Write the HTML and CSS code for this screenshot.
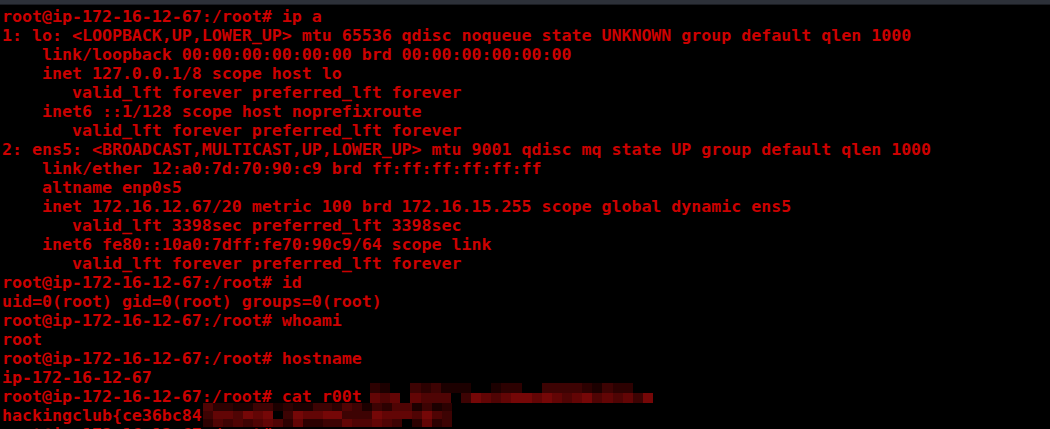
FILE: index.html
```html
<!DOCTYPE html>
<html lang="en">
<head>
    <meta charset="UTF-8">
    <title>Terminal</title>
    <link rel="stylesheet" href="styles.css">
</head>
<body>
    <!-- Barra superior da janela -->
    <div class="title-bar"></div>

    <!-- Saída do terminal -->
    <div class="terminal">
<pre class="output">root@ip-172-16-12-67:/root# ip a
1: lo: &lt;LOOPBACK,UP,LOWER_UP&gt; mtu 65536 qdisc noqueue state UNKNOWN group default qlen 1000
    link/loopback 00:00:00:00:00:00 brd 00:00:00:00:00:00
    inet 127.0.0.1/8 scope host lo
       valid_lft forever preferred_lft forever
    inet6 ::1/128 scope host noprefixroute
       valid_lft forever preferred_lft forever
2: ens5: &lt;BROADCAST,MULTICAST,UP,LOWER_UP&gt; mtu 9001 qdisc mq state UP group default qlen 1000
    link/ether 12:a0:7d:70:90:c9 brd ff:ff:ff:ff:ff:ff
    altname enp0s5
    inet 172.16.12.67/20 metric 100 brd 172.16.15.255 scope global dynamic ens5
       valid_lft 3398sec preferred_lft 3398sec
    inet6 fe80::10a0:7dff:fe70:90c9/64 scope link
       valid_lft forever preferred_lft forever
root@ip-172-16-12-67:/root# id
uid=0(root) gid=0(root) groups=0(root)
root@ip-172-16-12-67:/root# whoami
root
root@ip-172-16-12-67:/root# hostname
ip-172-16-12-67
root@ip-172-16-12-67:/root# cat r00t
hackingclub{ce36bc84
root@ip-172-16-12-67:/root# </pre>

        <!-- Partes censuradas (pixeladas) -->
        <div class="mosaic mosaic-cmd" data-cols="28" data-levels="1,4"></div>
        <div class="mosaic mosaic-flag" data-cols="25" data-levels="2,4,3"></div>
    </div>

    <script>
        // Gera os blocos pixelados com tons de vermelho escuro
        const shades = ['#000', '#1c0000', '#2c0101', '#3d0303', '#4f0404', '#620505', '#750707', '#8c0a0a'];
        let seed = 11;
        function rand() {
            seed = (seed * 9301 + 49297) % 233280;
            return seed / 233280;
        }
        document.querySelectorAll('.mosaic').forEach(function (mosaic) {
            const cols = Number(mosaic.dataset.cols);
            const levels = mosaic.dataset.levels.split(',').map(Number);
            levels.forEach(function (base) {
                for (let c = 0; c < cols; c++) {
                    const cell = document.createElement('span');
                    const idx = Math.min(shades.length - 1, base + Math.floor(rand() * 4) - 1);
                    cell.style.background = rand() < 0.06 ? '#000' : shades[idx];
                    mosaic.appendChild(cell);
                }
            });
        });
    </script>
</body>
</html>
```

FILE: styles.css
```css
/* Reset */
* {
    margin: 0;
    padding: 0;
    box-sizing: border-box;
}

body {
    background-color: #000;
    width: 1050px;
    height: 429px;
    overflow: hidden;
}

.title-bar {
    height: 5px;
    background-color: #2c3038;
    border-bottom: 1px solid #1a1c21;
}

.terminal {
    position: relative;
    padding: 2px 0 0 2px;
}

.output {
    font-family: "DejaVu Sans Mono", monospace;
    font-weight: bold;
    font-size: 16.6px;
    line-height: 19px;
    color: #cc0000;
    white-space: pre;
}

/* Mosaico que esconde o texto */
.mosaic {
    position: absolute;
    display: grid;
}

.mosaic span {
    display: block;
}

.mosaic-cmd {
    left: 370px;
    top: 378px;
    width: 283px;
    grid-auto-rows: 10px;
    grid-template-columns: repeat(28, 1fr);
}

.mosaic-flag {
    left: 203px;
    top: 398px;
    width: 249px;
    grid-auto-rows: 8px;
    grid-template-columns: repeat(25, 1fr);
}
```
